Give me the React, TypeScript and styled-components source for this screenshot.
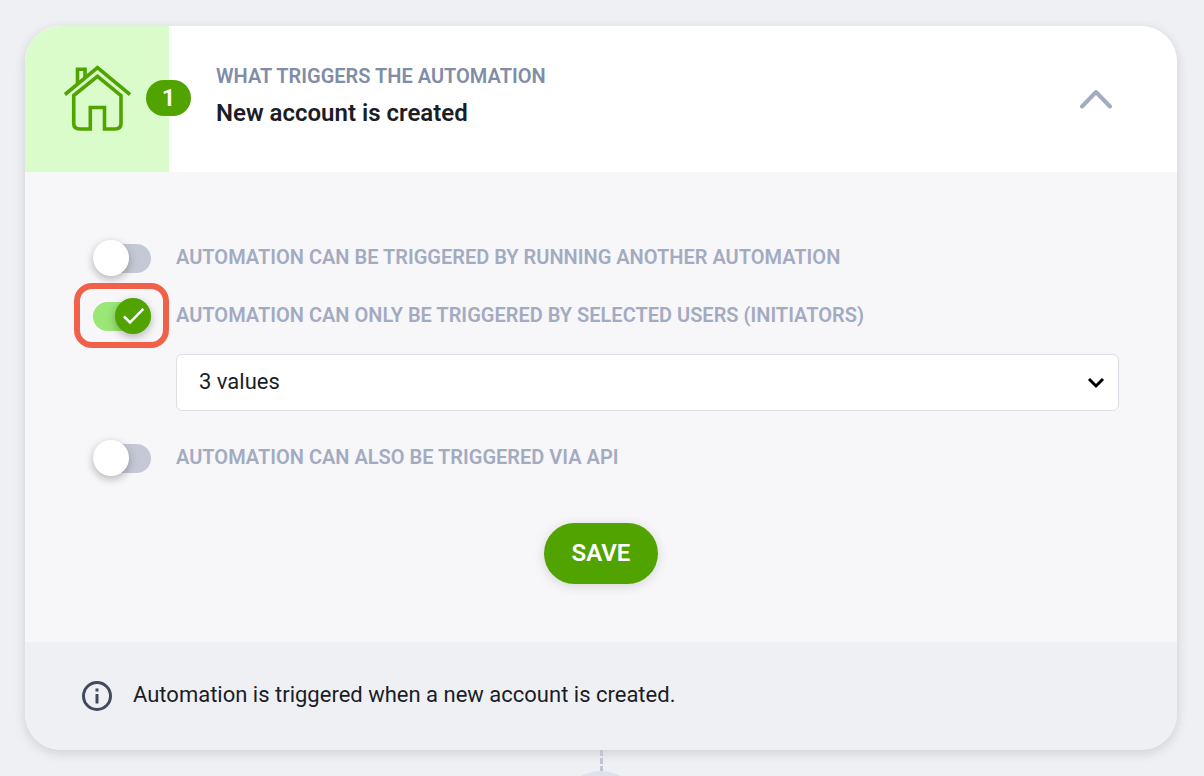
import React, { useState } from 'react';
import styled, { createGlobalStyle } from 'styled-components';

const GlobalStyle = createGlobalStyle`
  *, *::before, *::after { box-sizing: border-box; }
  body {
    margin: 0;
    background: #eef0f4;
    color: #1b1d27;
    font-family: Roboto, "Liberation Sans", sans-serif;
  }
`;

const Page = styled.main`
  display: flex;
  flex-direction: column;
  height: 100vh;
  padding: 26px 27px 0 25px;
  overflow: hidden;
`;

const Card = styled.section`
  flex: none;
  border-radius: 36px;
  background: #f7f7f9;
  box-shadow: 0 3px 12px rgba(0, 0, 0, 0.14);
  overflow: hidden;
`;

const Header = styled.header`
  display: flex;
  align-items: stretch;
  height: 146px;
  background: #fff;
`;

const IconPanel = styled.div`
  position: relative;
  display: flex;
  flex: none;
  align-items: center;
  justify-content: center;
  width: 144px;
  padding-bottom: 2px;
  background: #dafccb;
`;

const StepBadge = styled.span`
  position: absolute;
  top: 54px;
  right: -22px;
  width: 45px;
  height: 36px;
  border-radius: 18px;
  background: #51a300;
  color: #fff;
  font-size: 24px;
  font-weight: 600;
  line-height: 36px;
  text-align: center;
`;

const Titles = styled.div`
  flex: 1;
  padding: 36px 0 0 47px;
`;

const Eyebrow = styled.p`
  margin: 0;
  color: #7f8da6;
  font-size: 20px;
  font-weight: 600;
  line-height: 28px;
`;

const Title = styled.h2`
  margin: 4px 0 0;
  font-size: 24px;
  font-weight: 600;
  line-height: 38px;
`;

const CollapseButton = styled.button`
  align-self: center;
  display: flex;
  margin: 0 64px 0 0;
  padding: 0;
  border: 0;
  background: none;
  cursor: pointer;
`;

const Settings = styled.form`
  display: flex;
  flex-direction: column;
  padding: 68px 58px 58px 68px;
`;

const ToggleRow = styled.label<{ $gap: number }>`
  display: flex;
  align-items: center;
  gap: 25px;
  height: 36px;
  margin-top: ${({ $gap }) => $gap}px;
  cursor: pointer;
`;

const ToggleText = styled.span`
  padding-bottom: 2px;
  color: #a3abc1;
  font-size: 20px;
  font-weight: 600;
  line-height: 34px;
`;

const ToggleBox = styled.span`
  position: relative;
  display: flex;
  flex: none;
  align-items: center;
  width: 58px;
  height: 36px;
`;

const ToggleInput = styled.input`
  appearance: none;
  display: flex;
  align-items: center;
  width: 58px;
  height: 29px;
  margin: 0;
  border-radius: 15px;
  background: #c5c9d6;
  cursor: pointer;

  &::before {
    content: "";
    flex: none;
    width: 36px;
    height: 36px;
    border-radius: 50%;
    background: #fff;
    box-shadow: 0 3px 8px rgba(0, 0, 0, 0.28);
  }

  &:checked {
    justify-content: flex-end;
    background: #9ae676;
  }

  &:checked::before {
    background: #51a300;
  }
`;

const ToggleCheck = styled.svg`
  position: absolute;
  top: 0;
  right: 0;
  pointer-events: none;
`;

const Highlight = styled.span`
  position: absolute;
  inset: -15px -18px -14px -19px;
  border: 6px solid #f1614a;
  border-radius: 18px;
  pointer-events: none;
`;

const SelectWrap = styled.div`
  position: relative;
  margin: 20px 0 0 83px;
`;

const Select = styled.select`
  appearance: none;
  display: block;
  width: 100%;
  height: 57px;
  padding: 0 60px 2px 22px;
  border: 1px solid #dddfe8;
  border-radius: 6px;
  background: #fff;
  color: #1b1d27;
  font-family: inherit;
  font-size: 22px;
`;

const SelectArrow = styled.svg`
  position: absolute;
  top: 23px;
  right: 14px;
  pointer-events: none;
`;

const SaveButton = styled.button`
  height: 61px;
  margin: 47px 0 0;
  padding: 0 28px 2px;
  border: 0;
  border-radius: 31px;
  background: #51a300;
  box-shadow: 0 2px 12px rgba(0, 0, 0, 0.14);
  color: #fff;
  font-family: inherit;
  font-size: 24px;
  font-weight: 600;
  cursor: pointer;
`;

const SaveArea = styled.div`
  display: flex;
  justify-content: center;
  margin-left: -10px;
`;

const Footer = styled.footer`
  display: flex;
  align-items: center;
  gap: 20px;
  height: 108px;
  padding: 0 56px;
  background: #eff0f4;
`;

const FooterText = styled.p`
  margin: 0;
  padding-bottom: 2px;
  font-size: 22px;
  line-height: 30px;
`;

const NextStep = styled.div`
  display: flex;
  flex: 1;
  flex-direction: column;
  align-items: center;
  min-height: 0;
`;

const Connector = styled.div`
  flex: none;
  width: 3px;
  height: 21px;
  background: repeating-linear-gradient(#c0c4d2 0 6px, transparent 6px 8px);
`;

const NextNode = styled.div`
  flex: none;
  width: 84px;
  height: 84px;
  border-radius: 50%;
  background: #dfe2ea;
`;

const HouseIcon = () => (
  <svg width="68" height="68" viewBox="0 0 68 68" fill="none" stroke="#51a300" strokeWidth="3.600" aria-hidden="true">
    <path d="M2 30.500 34.500 3.500 67 30.500" />
    <path d="M14.500 19V5.300H22V13" />
    <path d="M10.700 31.500 34.500 12.300 58 31.500V59.500Q58 65 52 65H41.500V43.500H27.300V65H17Q10.700 65 10.700 59.500Z" />
  </svg>
);

type ToggleProps = {
  text: string;
  gap?: number;
  initial?: boolean;
  highlighted?: boolean;
};

const Toggle = ({ text, gap = 0, initial = false, highlighted = false }: ToggleProps) => {
  const [on, setOn] = useState(initial);
  return (
    <ToggleRow $gap={gap}>
      <ToggleBox>
        <ToggleInput type="checkbox" checked={on} onChange={() => setOn(!on)} />
        {on && (
          <ToggleCheck width="36" height="36" viewBox="0 0 36 36" fill="none" stroke="#fff" strokeWidth="2.500" aria-hidden="true">
            <path d="M9 18.500 15 24.500 28.300 10.800" />
          </ToggleCheck>
        )}
        {highlighted && <Highlight />}
      </ToggleBox>
      <ToggleText>{text}</ToggleText>
    </ToggleRow>
  );
};

export default function App() {
  return (
    <>
      <GlobalStyle />
      <Page>
        <Card>
          <Header>
            <IconPanel>
              <HouseIcon />
              <StepBadge>1</StepBadge>
            </IconPanel>
            <Titles>
              <Eyebrow>WHAT TRIGGERS THE AUTOMATION</Eyebrow>
              <Title>New account is created</Title>
            </Titles>
            <CollapseButton type="button" aria-label="Collapse">
              <svg width="34" height="20" viewBox="0 0 34 20" fill="none" stroke="#a3abc1" strokeWidth="4" strokeLinecap="round" strokeLinejoin="round">
                <path d="M3 17.500 17 3 31 17.500" />
              </svg>
            </CollapseButton>
          </Header>
          <Settings onSubmit={(event) => event.preventDefault()}>
            <Toggle text="AUTOMATION CAN BE TRIGGERED BY RUNNING ANOTHER AUTOMATION" />
            <Toggle text="AUTOMATION CAN ONLY BE TRIGGERED BY SELECTED USERS (INITIATORS)" gap={22} initial highlighted />
            <SelectWrap>
              <Select aria-label="Initiators">
                <option>3 values</option>
              </Select>
              <SelectArrow width="18" height="12" viewBox="0 0 18 12" fill="none" stroke="#000" strokeWidth="3" aria-hidden="true">
                <path d="M2 2 9 9 16 2" />
              </SelectArrow>
            </SelectWrap>
            <Toggle text="AUTOMATION CAN ALSO BE TRIGGERED VIA API" gap={29} />
            <SaveArea>
              <SaveButton type="submit">SAVE</SaveButton>
            </SaveArea>
          </Settings>
          <Footer>
            <svg width="32" height="32" viewBox="0 0 32 32" fill="none" stroke="#434a60" strokeWidth="3" aria-hidden="true">
              <circle cx="16" cy="16" r="13.500" />
              <path d="M16 14V23.500M16 8.500V11.500" />
            </svg>
            <FooterText>Automation is triggered when a new account is created.</FooterText>
          </Footer>
        </Card>
        <NextStep>
          <Connector />
          <NextNode />
        </NextStep>
      </Page>
    </>
  );
}
